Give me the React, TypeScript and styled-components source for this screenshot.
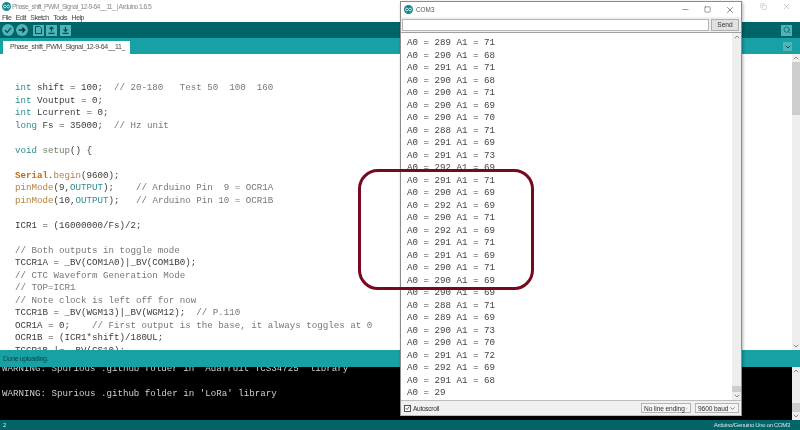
import React from 'react';
import styled, { createGlobalStyle } from 'styled-components';
import { ChevronDown, ChevronUp, Copy, Minus, Search, Square, X } from 'lucide-react';

type Kind = 'plain' | 'type' | 'fn' | 'setup' | 'bold' | 'const' | 'note';
type Tok = [string, Kind?];

const code: Tok[][] = [
  [['int', 'type'], [' shift = 100;  '], ['// 20-180   Test 50  100  160', 'note']],
  [['int', 'type'], [' Voutput = 0;']],
  [['int', 'type'], [' Lcurrent = 0;']],
  [['long', 'type'], [' Fs = 35000;  '], ['// Hz unit', 'note']],
  [],
  [['void', 'type'], [' '], ['setup', 'setup'], ['() {']],
  [],
  [['Serial', 'bold'], ['.'], ['begin', 'fn'], ['(9600);']],
  [['pinMode', 'fn'], ['(9,'], ['OUTPUT', 'const'], [');    '], ['// Arduino Pin  9 = OCR1A', 'note']],
  [['pinMode', 'fn'], ['(10,'], ['OUTPUT', 'const'], [');   '], ['// Arduino Pin 10 = OCR1B', 'note']],
  [],
  [['ICR1 = (16000000/Fs)/2;']],
  [],
  [['// Both outputs in toggle mode', 'note']],
  [['TCCR1A = _BV(COM1A0)|_BV(COM1B0);']],
  [['// CTC Waveform Generation Mode', 'note']],
  [['// TOP=ICR1', 'note']],
  [['// Note clock is left off for now', 'note']],
  [['TCCR1B = _BV(WGM13)|_BV(WGM12);  '], ['// P.110', 'note']],
  [['OCR1A = 0;    '], ['// First output is the base, it always toggles at 0', 'note']],
  [['OCR1B = (ICR1*shift)/180UL;']],
  [['TCCR1B |= _BV(CS10);']],
];

const readings: [number, number][] = [
  [291, 71], [289, 71], [290, 68], [291, 71], [290, 68], [290, 71], [290, 69], [290, 70], [288, 71],
  [291, 69], [291, 73], [292, 69], [291, 71], [290, 69], [292, 69], [290, 71], [292, 69], [291, 71],
  [291, 69], [290, 71], [290, 69], [290, 69], [288, 71], [289, 69], [290, 73], [290, 70], [291, 72],
  [292, 69], [291, 68],
];

const GlobalStyle = createGlobalStyle`
  html, body { margin: 0; padding: 0; background: #fff; }
  * { box-sizing: border-box; }
`;

const Page = styled.div`
  position: relative;
  width: 800px; height: 430px;
  overflow: hidden;
  display: flex; flex-direction: column;
  background: #fff;
  font-family: "Liberation Sans", Arial, sans-serif;
  white-space: nowrap;
  filter: blur(0.3px);
`;

const TitleBar = styled.div`
  height: 12px; flex-shrink: 0;
  padding: 1px 3px 0 2px;
  display: flex; align-items: center; gap: 1px;
  font-size: 6.8px; letter-spacing: -0.6px; color: #8a8a8a;
`;

const TitleText = styled.span`
  flex: 1;
`;

const GhostButton = styled.span`
  width: 22px; display: flex; justify-content: center;
  color: #aaa;
`;

const MenuBar = styled.div`
  height: 10px; flex-shrink: 0;
  padding-left: 2px;
  display: flex; align-items: center; gap: 4.5px;
  font-size: 7px; letter-spacing: -0.5px; color: #444;
`;

const Toolbar = styled.div`
  height: 16px; flex-shrink: 0;
  padding: 0 8px 0 2px;
  background: #006468;
  display: flex; align-items: center; gap: 2px;
`;

const RoundButton = styled.span`
  width: 12px; height: 12px;
  border-radius: 50%;
  background: #4fb5b8;
  display: flex; align-items: center; justify-content: center;
`;

const SquareButton = styled.span<{ $first?: boolean }>`
  width: 11px; height: 11px;
  margin-left: ${p => (p.$first ? '2.5px' : '0.5px')};
  background: #4fb5b8;
  display: flex; align-items: center; justify-content: center;
`;

const ToolbarGap = styled.span`
  flex: 1;
`;

const SearchButton = styled.span`
  width: 11px; height: 11px;
  background: #4fb5b8; color: #004f52;
  display: flex; align-items: center; justify-content: center;
`;

const TabStrip = styled.div`
  height: 16px; flex-shrink: 0;
  padding: 3px 8px 0 3px;
  background: #17a1a5;
  display: flex; align-items: flex-end; justify-content: space-between;
`;

const Tab = styled.div`
  width: 127px; height: 13px;
  padding-left: 7px;
  background: #fff;
  font-size: 7px; letter-spacing: -0.37px; line-height: 11px; color: #444;
`;

const TabMenu = styled.span`
  width: 9px; height: 9px;
  margin-bottom: 3px;
  background: #4fb5b8; color: #004f52;
  display: flex; align-items: center; justify-content: center;
`;

const Editor = styled.div`
  flex: 1; min-height: 0;
  display: flex;
  overflow: hidden;
`;

const Code = styled.div`
  flex: 1;
  padding: 28px 0 0 15px;
`;

const Mono = styled.div`
  height: 12.5px;
  font-family: "Liberation Mono", monospace;
  font-size: 9.17px; line-height: 12.5px;
  white-space: pre;
  color: #3c3c3c;
`;

const kindColor: Record<Kind, string> = {
  plain: '#3c3c3c',
  type: '#2f8d90',
  fn: '#b5803f',
  setup: '#6f8068',
  bold: '#c26a1c',
  const: '#2f8d90',
  note: '#777',
};

const Token = styled.span<{ $kind: Kind }>`
  color: ${p => kindColor[p.$kind]};
  font-weight: ${p => (p.$kind === 'bold' ? 700 : 400)};
`;

const Scrollbar = styled.div<{ $width: number }>`
  width: ${p => p.$width}px; flex-shrink: 0;
  background: #eee; color: #555;
  display: flex; flex-direction: column; align-items: center;
`;

const Thumb = styled.div<{ $size: number }>`
  width: 100%; flex-shrink: 0;
  height: ${p => p.$size}px;
  background: #cdcdcd;
`;

const Spacer = styled.div`
  flex: 1;
`;

const Status = styled.div`
  height: 17px; flex-shrink: 0;
  padding: 5px 0 0 3px;
  background: #17a1a5;
  font-size: 7px; letter-spacing: -0.4px; color: #0b4a4c;
`;

const Console = styled.div`
  height: 53px; flex-shrink: 0;
  background: #000;
  display: flex;
  overflow: hidden;
`;

const ConsoleText = styled.div`
  flex: 1;
  padding: 0 0 20px 2px;
  display: flex; flex-direction: column; justify-content: flex-end;
`;

const ConsoleLine = styled(Mono)`
  color: #cfcfcf;
  flex-shrink: 0;
`;

const Footer = styled.div`
  height: 10px; flex-shrink: 0;
  padding: 0 10px 0 3px;
  background: #006468;
  display: flex; align-items: center; justify-content: space-between;
  font-size: 6px; letter-spacing: -0.33px; color: #cfe6e6;
`;

/* floating serial monitor, sits over the main window */
const Monitor = styled.div`
  position: absolute;
  left: 400px; top: 1px;
  width: 342px; height: 415px;
  background: #f0f0f0;
  border: 1px solid #8c8c8c;
  border-bottom-color: #bbb;
  box-shadow: 1px 1px 3px rgba(0, 0, 0, 0.3);
  display: flex; flex-direction: column;
`;

const MonitorTitle = styled.div`
  height: 15px; flex-shrink: 0;
  padding: 0 1px 0 3px;
  background: #fff;
  display: flex; align-items: center; gap: 3px;
  font-size: 6.4px; color: #555;
`;

const WindowButton = styled.span`
  width: 19.5px; display: flex; justify-content: center;
  color: #222;
`;

const SendRow = styled.div`
  height: 15px; flex-shrink: 0;
  padding: 2px 2px 1px 1px;
  background: #f0f0f0;
  display: flex; gap: 2px;
`;

const SendInput = styled.div`
  flex: 1;
  background: #fff;
  border: 1px solid #b5b5b5;
`;

const SendButton = styled.div`
  width: 28px;
  background: #e1e1e1;
  border: 1px solid #adadad;
  font-size: 6.6px; line-height: 10px; text-align: center; color: #333;
`;

const MonitorBody = styled.div`
  flex: 1; min-height: 0;
  background: #fff;
  border-top: 1px solid #a0a0a0;
  border-bottom: 1px solid #bdbdbd;
  display: flex;
`;

const SerialList = styled.div`
  flex: 1;
  padding: 0 0 0.5px 6px;
  display: flex; flex-direction: column; justify-content: flex-end;
  overflow: hidden;
`;

const SerialLine = styled(Mono)`
  flex-shrink: 0;
  color: #444;
`;

const MonitorFoot = styled.div`
  height: 14px; flex-shrink: 0;
  padding: 0 2px 0 3px;
  display: flex; align-items: center; gap: 4px;
  font-size: 6.6px; color: #333;
`;

const CheckBox = styled.span`
  width: 7px; height: 7px;
  margin-right: -2px;
  background: #fff;
  border: 1px solid #555;
  display: flex; align-items: center; justify-content: center;
`;

const AutoLabel = styled.span`
  flex: 1;
  letter-spacing: -0.3px;
`;

const Select = styled.span<{ $width: number }>`
  width: ${p => p.$width}px; height: 10px;
  padding: 0 2px;
  background: #f4f4f4;
  border: 1px solid #b5b5b5;
  display: flex; align-items: center; justify-content: space-between;
  font-size: 6.6px; letter-spacing: -0.1px; color: #333;
`;

const Callout = styled.div`
  position: absolute;
  left: 358px; top: 169px;
  width: 176px; height: 121px;
  border: 3px solid #77091f;
  border-radius: 20px;
  pointer-events: none;
`;

const Logo = () => (
  <svg width="9" height="9" viewBox="0 0 20 20">
    <circle cx="10" cy="10" r="10" fill="#17888c" />
    <path d="M3.5 10c0-4 4.500-4 6.500 0s6.500 4 6.500 0-4.500-4-6.500 0-6.500 4-6.500 0Z" fill="none" stroke="#fff" strokeWidth="1.800" />
  </svg>
);

const GlyphCheck = () => (
  <svg width="8" height="8" viewBox="0 0 8 8">
    <path d="M1 4.200 3.200 6.400 7 1.800" fill="none" stroke="#004f52" strokeWidth="1.300" />
  </svg>
);

const GlyphRight = () => (
  <svg width="8" height="8" viewBox="0 0 8 8">
    <path d="M.8 4H6.500M4.300 1.500 6.800 4 4.300 6.500" fill="none" stroke="#00383a" strokeWidth="1.300" />
  </svg>
);

const GlyphNew = () => (
  <svg width="7" height="8" viewBox="0 0 7 8">
    <path d="M.5.5H4.500L6.500 2.500V7.500H.5Z" fill="none" stroke="#004f52" />
  </svg>
);

const GlyphOpen = () => (
  <svg width="7" height="8" viewBox="0 0 7 8">
    <path d="M3.500 5.500V1M1.500 3 3.500 1 5.500 3M.5 7.300H6.500" fill="none" stroke="#004f52" strokeWidth="1.200" />
  </svg>
);

const GlyphSave = () => (
  <svg width="7" height="8" viewBox="0 0 7 8">
    <path d="M3.500.8V5.300M1.500 3.300 3.500 5.300 5.500 3.300M.5 7.300H6.500" fill="none" stroke="#004f52" strokeWidth="1.200" />
  </svg>
);

const App: React.FC = () => (
  <Page>
    <GlobalStyle />
    <TitleBar>
      <Logo />
      <TitleText>Phase_shift_PWM_Signal_12-9-64__11_ | Arduino 1.6.5</TitleText>
      <GhostButton><Copy size={7} strokeWidth={1.500} /></GhostButton>
      <GhostButton><X size={9} strokeWidth={1.500} /></GhostButton>
    </TitleBar>
    <MenuBar>
      {['File', 'Edit', 'Sketch', 'Tools', 'Help'].map(m => <span key={m}>{m}</span>)}
    </MenuBar>
    <Toolbar>
      <RoundButton><GlyphCheck /></RoundButton>
      <RoundButton><GlyphRight /></RoundButton>
      <SquareButton $first><GlyphNew /></SquareButton>
      <SquareButton><GlyphOpen /></SquareButton>
      <SquareButton><GlyphSave /></SquareButton>
      <ToolbarGap />
      <SearchButton><Search size={8} strokeWidth={2} /></SearchButton>
    </Toolbar>
    <TabStrip>
      <Tab>Phase_shift_PWM_Signal_12-9-64__11_</Tab>
      <TabMenu><ChevronDown size={8} strokeWidth={3} /></TabMenu>
    </TabStrip>
    <Editor>
      <Code>
        {code.map((line, i) => (
          <Mono key={i}>
            {line.map(([text, kind = 'plain'], j) => <Token key={j} $kind={kind}>{text}</Token>)}
          </Mono>
        ))}
      </Code>
      <Scrollbar $width={8}>
        <ChevronUp size={8} strokeWidth={2} />
        <Thumb $size={53} />
        <Spacer />
        <ChevronDown size={8} strokeWidth={2} />
      </Scrollbar>
    </Editor>
    <Status>Done uploading.</Status>
    <Console>
      <ConsoleText>
        <ConsoleLine>WARNING: Spurious .github folder in 'Adafruit TCS34725' library</ConsoleLine>
        <ConsoleLine> </ConsoleLine>
        <ConsoleLine>WARNING: Spurious .github folder in 'LoRa' library</ConsoleLine>
      </ConsoleText>
      <Scrollbar $width={8}>
        <ChevronUp size={8} strokeWidth={2} />
        <Spacer />
        <Thumb $size={9} />
        <ChevronDown size={8} strokeWidth={2} />
      </Scrollbar>
    </Console>
    <Footer>
      <span>2</span>
      <span>Arduino/Genuino Uno on COM3</span>
    </Footer>

    <Monitor>
      <MonitorTitle>
        <Logo />
        <TitleText>COM3</TitleText>
        <WindowButton><Minus size={9} strokeWidth={1.200} /></WindowButton>
        <WindowButton><Square size={7} strokeWidth={1.500} /></WindowButton>
        <WindowButton><X size={10} strokeWidth={1.300} /></WindowButton>
      </MonitorTitle>
      <SendRow>
        <SendInput />
        <SendButton>Send</SendButton>
      </SendRow>
      <MonitorBody>
        <SerialList>
          {readings.map(([a, b], i) => <SerialLine key={i}>{`A0 = ${a} A1 = ${b}`}</SerialLine>)}
          <SerialLine>A0 = 29</SerialLine>
        </SerialList>
        <Scrollbar $width={9}>
          <ChevronUp size={8} strokeWidth={2} />
          <Spacer />
          <Thumb $size={6} />
          <ChevronDown size={8} strokeWidth={2} />
        </Scrollbar>
      </MonitorBody>
      <MonitorFoot>
        <CheckBox><GlyphCheck /></CheckBox>
        <AutoLabel>Autoscroll</AutoLabel>
        <Select $width={50}>No line ending <ChevronDown size={7} /></Select>
        <Select $width={44}>9600 baud <ChevronDown size={7} /></Select>
      </MonitorFoot>
    </Monitor>
    <Callout />
  </Page>
);

export default App;
